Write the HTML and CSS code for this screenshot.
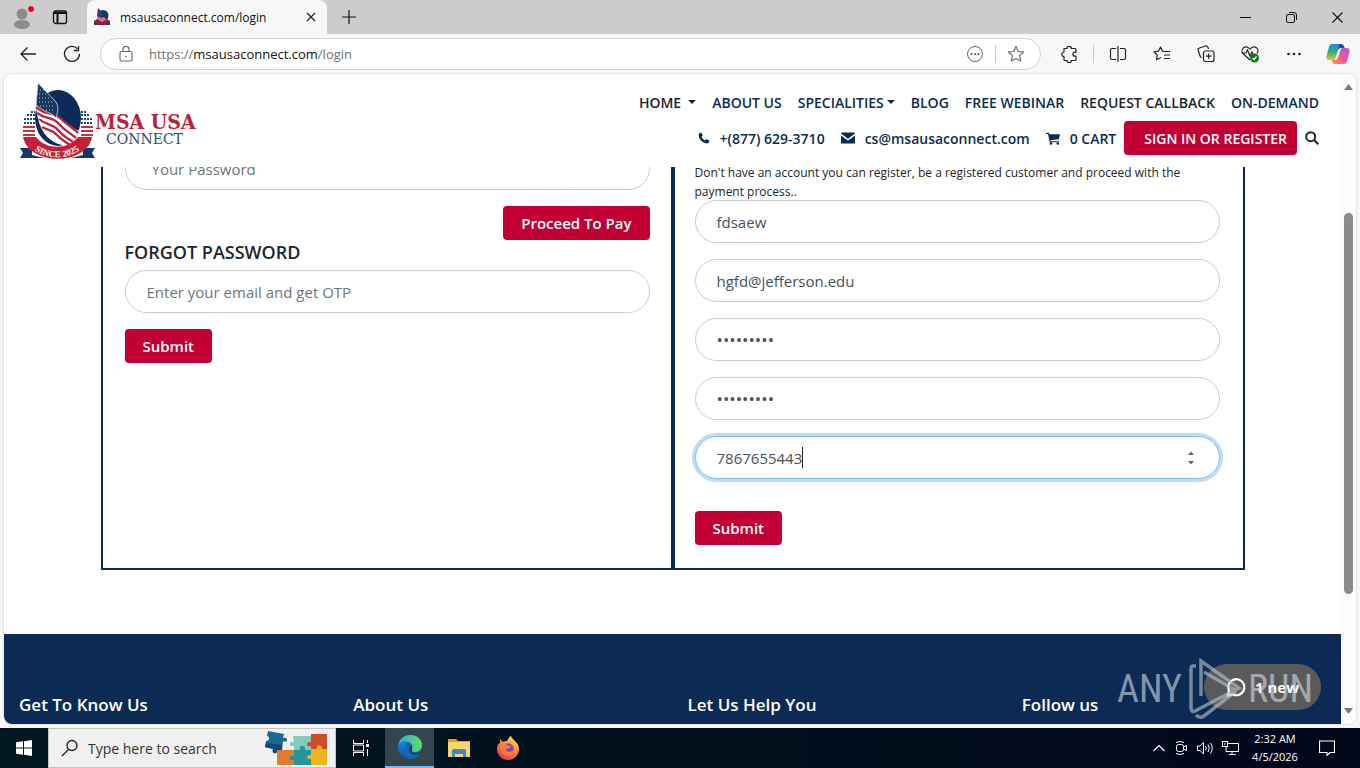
FILE: index.html
```html
<!DOCTYPE html>
<html lang="en">
<head>
<meta charset="utf-8">
<title>MSA USA Connect - Login</title>
<link rel="stylesheet" href="styles.css">
</head>
<body>
<div class="desktop">
  <div class="tabbar">
    <button class="tool" aria-label="Profile">
      <svg width="28" height="28" viewBox="0 0 28 28"><circle cx="14" cy="11" r="5.5" fill="#8f8b88"/><ellipse cx="14" cy="21.500" rx="8" ry="4.500" fill="#8f8b88"/><circle cx="23" cy="6" r="3.500" fill="#d5091e" stroke="#e9d3d3"/></svg>
    </button>
    <button class="tool workspaces" aria-label="Workspaces">
      <svg width="16" height="16" viewBox="0 0 16 16" fill="none" stroke="#111" stroke-width="1.300"><rect x="1.500" y="2" width="13" height="12.500" rx="2"/><path d="M2 4h12M5.500 4v10" stroke-width="2"/></svg>
    </button>
    <div class="tab">
      <svg width="18" height="18" viewBox="0 0 18 18"><circle cx="10" cy="7.500" r="5.500" fill="#18345f"/><path d="M5 0l5 5-2 6-4-2z" fill="#26426e"/><path d="M4 8l4 2 3-1 4 4-2 3H4z" fill="#de7185"/><path d="M1 13l3-2 5 3 5-3 3 2v4H1z" fill="#8d2338"/><path d="M1 15h4v2H1zM13 15h4v2h-4z" fill="#183d72"/></svg>
      <span class="tab-title">msausaconnect.com/login</span>
      <button class="plain" aria-label="Close tab"><svg width="10" height="10" viewBox="0 0 10 10" stroke="#222" stroke-width="1.200"><path d="M1 1l8 8M9 1L1 9"/></svg></button>
    </div>
    <button class="tool" aria-label="New tab"><svg width="14" height="14" viewBox="0 0 14 14" stroke="#111" stroke-width="1.200"><path d="M7 0v14M0 7h14"/></svg></button>
    <div class="window-buttons">
      <button class="plain" aria-label="Minimize"><svg width="11" height="11" viewBox="0 0 11 11" stroke="#111"><path d="M0 5.500h11"/></svg></button>
      <button class="plain" aria-label="Restore"><svg width="11" height="11" viewBox="0 0 11 11" fill="none" stroke="#111"><rect x=".5" y="2.500" width="8" height="8" rx="1.500"/><path d="M3 .5h5a2.500 2.500 0 0 1 2.500 2.500v5"/></svg></button>
      <button class="plain" aria-label="Close"><svg width="11" height="11" viewBox="0 0 11 11" stroke="#111" stroke-width="1.100"><path d="M.5.5l10 10M10.500.5l-10 10"/></svg></button>
    </div>
  </div>

  <div class="toolbar">
    <button class="tool" aria-label="Back"><svg width="18" height="16" viewBox="0 0 18 16" fill="none" stroke="#222" stroke-width="1.300"><path d="M17 8H2M8.500 1.500L2 8l6.500 6.500"/></svg></button>
    <button class="tool" aria-label="Refresh"><svg width="18" height="18" viewBox="0 0 18 18" fill="none" stroke="#222" stroke-width="1.300"><path d="M16.500 9A7.500 7.500 0 1 1 14.500 3.800M15.500 1v4.500H11"/></svg></button>
    <div class="address">
      <svg width="14" height="16" viewBox="0 0 14 16" fill="none" stroke="#666" stroke-width="1.100"><rect x="1" y="5.500" width="12" height="9.500" rx="1.500"/><path d="M4 5.500V3.500a3 3 0 0 1 6 0v2"/><circle cx="7" cy="10.500" r=".8" fill="#555" stroke="none"/></svg>
      <span class="url">https://<span class="host">msausaconnect.com</span>/login</span>
      <button class="plain" aria-label="More"><svg width="18" height="18" viewBox="0 0 18 18" fill="none" stroke="#666"><circle cx="9" cy="9" r="7.500"/><g fill="#555" stroke="none"><circle cx="5.500" cy="9" r="1"/><circle cx="9" cy="9" r="1"/><circle cx="12.500" cy="9" r="1"/></g></svg></button>
      <span class="divider"></span>
      <button class="plain" aria-label="Add to favorites"><svg width="18" height="18" viewBox="0 0 18 18" fill="none" stroke="#666" stroke-width="1.100" stroke-linejoin="round"><path d="M9 1.500l2.300 5 5.300.6-4 3.600 1.100 5.400L9 13.400l-4.700 2.700 1.100-5.400-4-3.600 5.300-.6z"/></svg></button>
    </div>
    <button class="tool" aria-label="Extensions"><svg width="18" height="18" viewBox="0 0 18 18" fill="none" stroke="#222" stroke-width="1.200" stroke-linejoin="round"><path d="M4 3.500h3a2.200 2.200 0 0 1 4.400 0H15a1 1 0 0 1 1 1v2.700h-1a2 2 0 0 0 0 4h1v3.300a1 1 0 0 1-1 1h-3.600a2.200 2.200 0 0 1-4.400 0H5a1 1 0 0 1-1-1v-3a2.200 2.200 0 0 1 0-4.500z"/></svg></button>
    <span class="divider"></span>
    <button class="tool" aria-label="Split screen"><svg width="18" height="18" viewBox="0 0 18 18" fill="none" stroke="#222" stroke-width="1.200"><path d="M7 3.500H3a1.500 1.500 0 0 0-1.500 1.500v8A1.500 1.500 0 0 0 3 14.500h4M11 3.500h4A1.500 1.500 0 0 1 16.500 5v8a1.500 1.500 0 0 1-1.500 1.500h-4M9 1v16"/></svg></button>
    <button class="tool" aria-label="Favorites"><svg width="18" height="18" viewBox="0 0 18 18" fill="none" stroke="#222" stroke-width="1.200" stroke-linejoin="round"><path d="M12 6.500l-2.500-.3L7.500 2l-2 4.200-4.500.7 3.300 3.200-.8 4.700L8 12.500M11 6.500h6M11 10h6M11 13.500h6"/></svg></button>
    <button class="tool" aria-label="Collections"><svg width="18" height="18" viewBox="0 0 18 18" fill="none" stroke="#222" stroke-width="1.200"><rect x="6.500" y="6" width="10.500" height="10.500" rx="2"/><path d="M11.700 8.500v5.500M9 11.200h5.500M4.500 12.500l-1-.5L1.200 5.500a2 2 0 0 1 1.200-2.500l6-2A2 2 0 0 1 11 2.500l.7 1.500"/></svg></button>
    <button class="tool" aria-label="Browser essentials"><svg width="20" height="18" viewBox="0 0 20 18" fill="none" stroke="#222" stroke-width="1.200"><path d="M10 15L3 8.500a4 4 0 0 1 6-5.300l1 1 1-1a4 4 0 0 1 6 5.300M1.500 8H6l1.500-3 2.500 6 2-4 1 2"/><circle cx="14.500" cy="13" r="4.500" fill="#107c10" stroke="none"/><path d="M12.500 13l1.500 1.500 2.500-3" stroke="#fff"/></svg></button>
    <button class="tool" aria-label="Settings and more"><svg width="16" height="4" viewBox="0 0 16 4" fill="#222"><circle cx="2.500" cy="2" r="1.300"/><circle cx="8" cy="2" r="1.300"/><circle cx="13.500" cy="2" r="1.300"/></svg></button>
    <button class="tool" aria-label="Copilot"><svg width="24" height="22" viewBox="0 0 24 22"><defs><linearGradient id="ca" x1="0" y1="0" x2="0" y2="1"><stop offset="0" stop-color="#1689e5"/><stop offset=".55" stop-color="#38b56d"/><stop offset="1" stop-color="#eac328"/></linearGradient><linearGradient id="cb" x1="1" y1="0" x2="0" y2="1"><stop offset="0" stop-color="#a55af0"/><stop offset=".5" stop-color="#ee5792"/><stop offset="1" stop-color="#ff9a45"/></linearGradient></defs><path d="M6 1h9c2 0 3 2 3.500 4H15c-2 0-2.500 1-3 2.500L9.500 15C9 16.500 8 17 6.500 17H3c-3 0-3-3-2-6L3 4c.6-2 1.500-3 3-3z" fill="url(#ca)"/><path d="M18 21H9c-2 0-3-2-3.500-4H9c2 0 2.500-1 3-2.500L14.500 7C15 5.500 16 5 17.500 5H21c3 0 3 3 2 6l-2 7c-.6 2-1.500 3-3 3z" fill="url(#cb)"/><path d="M13 1h2c2 0 3 2 3.500 4H15c-2 0-2.500 1-3 2z" fill="#2449b8"/></svg></button>
  </div>

  <div class="viewport">
    <div class="page">
      <header class="site-header">
        <a class="brand" href="#" aria-label="MSA USA Connect">
          <svg width="182" height="80" viewBox="0 0 182 80">
            <ellipse cx="39" cy="35" rx="23" ry="28" fill="#0b2b59"/>
            <g fill="#cf2c43"><path d="M4 43h12v2H4zM4 47h12v2H4zM4 51h12v2H4zM62 43h12v2H62zM62 47h12v2H62zM62 51h12v2H62z"/></g>
            <g stroke="#214c7c" stroke-width="2" stroke-dasharray="2 1"><path d="M5 40h11M5 36h11M8 32h8M12 29h4M62 40h12M62 36h12M62 32h8M62 29h5"/></g>
            <path d="M17 22c8 10 15 6 23 13 8 7 14 9 21 14L53 63C36 63 19 55 17 22z" fill="#fff"/>
            <g fill="none" stroke="#c3203c" stroke-width="2.300"><path d="M17 24c9 9 16 4 24 11 7 7 12 9 18 15"/><path d="M18 30c9 7 15 3 22 11 6 7 10 8 17 14"/><path d="M20 36c8 7 13 4 19 11 5 6 9 8 15 12"/><path d="M23 44c7 4 10 2 15 8 4 5 8 6 13 10"/></g>
            <path d="M19 0l18 19c3 5 2 9 0 16-4-6-9-4-20-13z" fill="#17375f" stroke="#d9e1eb" stroke-width=".8"/>
            <g stroke="#b9cadd" stroke-dasharray="1 2"><path d="M21 7h4M20 11h8M20 15h12M20 19h15M21 23h15M27 27h9"/></g>
            <path d="M1 65h12v7l12 3H1l3-5zM76 65H64v7l-12 3h24l-3-5z" fill="#17376a"/>
            <path d="M4 54h13c10 13 32 13 42 0h14c-5 29-63 29-69 0z" fill="#c4203a"/>
            <path id="ribbon" d="M8 60c14 19 46 19 60 0" fill="none"/>
            <text class="ribbon-text"><textPath href="#ribbon" startOffset="50%">SINCE 2025</textPath></text>
            <text x="76" y="46" class="brand-name">MSA USA</text>
            <text x="87" y="61" class="brand-sub">CONNECT</text>
          </svg>
        </a>
        <div class="menus">
          <nav class="menu" aria-label="Main">
            <a class="dark has-menu spaced" href="#">HOME</a>
            <a href="#">ABOUT US</a>
            <a class="has-menu" href="#">SPECIALITIES</a>
            <a href="#">BLOG</a>
            <a href="#">FREE WEBINAR</a>
            <a class="dark" href="#">REQUEST CALLBACK</a>
            <a href="#">ON-DEMAND</a>
          </nav>
          <div class="menu contact">
            <a href="#"><svg width="12" height="12" viewBox="0 0 12 12"><path d="M1 1.500L3.200.5l1.600 3-1.300 1.300c.7 1.600 2 2.900 3.600 3.600l1.400-1.300 3 1.700-1 2.200C6 13-.8 7 1 1.500z" fill="#0b2b55"/></svg>+(877) 629-3710</a>
            <a href="#"><svg width="14" height="12" viewBox="0 0 14 12" fill="#0b2b55"><path d="M0 1.500Q0 .5 1 .5h12q1 0 1 1L7 6.800z"/><path d="M0 3.500l7 5 7-5v7q0 1-1 1H1q-1 0-1-1z"/></svg>cs@msausaconnect.com</a>
            <a class="cart" href="#"><svg width="14" height="13" viewBox="0 0 14 13" fill="#0b2b55"><path d="M0 .8h2.800l.5 1.500H14l-1.200 5L4.600 8.200l.2 1H13v1H3.800L2 1.900H0z"/><circle cx="5" cy="11.500" r="1.300"/><circle cx="11.800" cy="11.500" r="1.300"/></svg>0 CART</a>
            <a class="sign-in" href="#">SIGN IN OR REGISTER</a>
            <button class="plain" aria-label="Search"><svg width="14" height="14" viewBox="0 0 14 14" fill="none" stroke="#212529" stroke-width="2"><circle cx="5.700" cy="5.700" r="4.500"/><path d="M9 9l4.300 4.300"/></svg></button>
          </div>
        </div>
      </header>

      <main class="panels">
        <section class="panel panel-login">
          <form class="stack">
            <input class="field" type="password" placeholder="Your Password" aria-label="Your Password">
            <button class="btn btn-end" type="button">Proceed To Pay</button>
          </form>
          <form class="forgot">
            <h2 class="heading"><label for="otp">FORGOT PASSWORD</label></h2>
            <div class="stack">
              <input class="field" id="otp" type="email" placeholder="Enter your email and get OTP">
              <button class="btn" type="button">Submit</button>
            </div>
          </form>
        </section>
        <section class="panel panel-register">
          <p class="note">Don't have an account you can register, be a registered customer and proceed with the payment process..</p>
          <form class="stack">
            <input class="field" type="text" value="fdsaew" aria-label="Name">
            <input class="field" type="email" value="hgfd@jefferson.edu" aria-label="Email">
            <input class="field field-secret" type="password" value="abcdefghi" aria-label="Password">
            <input class="field field-secret" type="password" value="abcdefghi" aria-label="Confirm password">
            <div class="phone">
              <input class="field field-active" type="number" value="7867655443" aria-label="Phone">
              <div class="field-overlay"><span class="caret"></span>
                <svg width="8" height="14" viewBox="0 0 8 14" fill="#666"><path d="M1 4l3-3.500L7 4zM1 10l3 3.500L7 10z"/></svg>
              </div>
            </div>
            <button class="btn btn-late" type="button">Submit</button>
          </form>
        </section>
      </main>

      <footer class="site-footer">
        <h3>Get To Know Us</h3>
        <h3>About Us</h3>
        <h3>Let Us Help You</h3>
        <h3>Follow us</h3>
      </footer>
      <button class="chat"><svg width="20" height="20" viewBox="0 0 20 20" fill="none" stroke="#fff" stroke-width="2.200"><path d="M2 18.500l1-5A8 8 0 1 1 7 17.500z"/></svg>1 new</button>
      <div class="watermark" aria-hidden="true">
        <span>ANY</span>
        <svg width="54" height="62" viewBox="0 0 54 62" fill="none" stroke="#bcc6d3" stroke-width="3.500"><path d="M8 8H5q-2 0-2 3v38q0 6 4 4l44-23L13 3v35M16 14l31 18M8 57q4 4 8 1l32-25"/></svg>
        <span>RUN</span>
      </div>
    </div>
    <div class="scrollbar" aria-hidden="true">
      <svg width="9" height="6" viewBox="0 0 9 6" fill="#777"><path d="M0 6l4.500-6L9 6z"/></svg>
      <div class="track"><div class="thumb"></div></div>
      <svg width="9" height="6" viewBox="0 0 9 6" fill="#777"><path d="M0 0l4.500 6L9 0z"/></svg>
    </div>
  </div>

  <div class="taskbar">
    <button class="task" aria-label="Start"><svg width="16" height="16" viewBox="0 0 16 16" fill="#fff"><path d="M0 2.300l7-1v6.200H0zM8 1.200L16 0v7.500H8zM0 8.500h7v6.200l-7-1zM8 8.500h8V16l-8-1.200z"/></svg></button>
    <label class="search">
      <svg width="18" height="18" viewBox="0 0 18 18" fill="none" stroke="#222" stroke-width="1.300"><circle cx="11" cy="6.500" r="5"/><path d="M7.500 10.500L1 17"/></svg>
      <input type="text" placeholder="Type here to search" aria-label="Type here to search">
      <svg width="64" height="36" viewBox="0 0 64 36"><path d="M3 1l16 3-1 4c6-2 5 6 0 3l-1 10-5-1c1 5-6 4-4-1L0 17l1-6c4 0 4-5 1-5z" fill="#176a98"/><path d="M1 13l16 2 0 6-5-1c1 5-6 4-4-1L0 17z" fill="#0f4777"/><path d="M28 6h18v15H29v-5c-6 1-5-6 0-4z" fill="#85cbbd"/><path d="M46 4h16v17H46v-5c-5 2-6-5 0-4z" fill="#cf4b29"/><path d="M12 20h17v15H12z" fill="#e47b2e"/><path d="M29 20h6c-2-5 6-6 5 0h7v15H29v-5c-6 1-6-6 0-4z" fill="#26949a"/><path d="M46 19h6c-2-5 6-5 5 0h5v16H46v-6c-5 1-5-5 0-4z" fill="#edb51d"/></svg>
    </label>
    <button class="task" aria-label="Task View"><svg width="18" height="16" viewBox="0 0 18 16" fill="none" stroke="#fff"><path d="M1.500 0v3.500h10V0M1.500 16v-3.500h10V16M1.500 5v6h10V5zM15.500 0v3M15.500 9v7"/><path d="M14 4h3v3h-3z" fill="#fff" stroke="none"/></svg></button>
    <button class="task task-active" aria-label="Microsoft Edge"><svg width="24" height="24" viewBox="0 0 24 24"><defs><linearGradient id="ea" x1="0" x2="1"><stop offset="0" stop-color="#2aaee0"/><stop offset="1" stop-color="#61db60"/></linearGradient><linearGradient id="eb" x2="0" y2="1"><stop offset="0" stop-color="#1689da"/><stop offset="1" stop-color="#1551a2"/></linearGradient></defs><circle cx="12" cy="12" r="12" fill="#1763b5"/><path d="M0 11C1 4 6 0 12 0c8 0 12 5 12 10 0 4-3 7-7 7-3 0-4-1-3-3 2-5-3-8-7-7-4 0-6 2-7 4z" fill="url(#ea)"/><path d="M0 11c2-4 6-6 10-4-5 4-5 12 1 16 0 0-10 0-11-10z" fill="url(#eb)"/><path d="M14 14c-1 3 1 4 4 4 2 0 4-1 6-3l-1 3c-3 2-11 3-12-3 0-3 1-4 3-5z" fill="#253f52"/></svg></button>
    <button class="task" aria-label="File Explorer"><svg width="22" height="20" viewBox="0 0 22 20"><path d="M0 1h8l2 2h12v6H0z" fill="#e5a01b"/><path d="M0 4h22v15H0z" fill="#f8d66e"/><path d="M4 19v-6q0-2 2-2h10q2 0 2 2v6h-3v-3H7v3z" fill="#3b8ac4"/></svg></button>
    <button class="task" aria-label="Firefox"><svg width="24" height="24" viewBox="0 0 24 24"><defs><linearGradient id="fa" x1=".8" y1="0" x2=".2" y2="1"><stop offset="0" stop-color="#fff044"/><stop offset=".4" stop-color="#ff9224"/><stop offset="1" stop-color="#f12667"/></linearGradient></defs><path d="M4 3l3 3c1-1 3-1 4-1 1-2 2-4 4-5 1 4 8 6 8 13 0 6-5 11-11 11S1 19 1 13c0-4 1-5 3-6z" fill="url(#fa)"/><circle cx="12.500" cy="12.500" r="5" fill="#7a3bd8"/><path d="M4 8c3-1 5-1 7 1l4 1c-1 3-4 2-5 4 2 3 6 2 8-1 0 5-4 7-7 7-5-1-7-5-7-12z" fill="#ff7a35"/></svg></button>
    <div class="tray">
      <svg width="12" height="8" viewBox="0 0 12 8" fill="none" stroke="#fff" stroke-width="1.200"><path d="M.5 7L6 1.500 11.500 7"/></svg>
      <svg width="16" height="16" viewBox="0 0 16 16" fill="none" stroke="#fff"><rect x="3.500" y="4.500" width="7" height="7" rx="2"/><path d="M10.500 7l3-1.500v5l-3-1.500M3 2.500q4-2 8 0M3 13.500q4 2 8 0"/></svg>
      <svg width="17" height="14" viewBox="0 0 17 14" fill="none" stroke="#fff"><path d="M.5 5v4.500H3L6.500 13V1.500L3 5zM8.500 5q1.500 2 0 4.500M11 3.500q2.500 3.500 0 7.500M13.500 2q3.500 5 0 10.500"/></svg>
      <svg width="17" height="14" viewBox="0 0 17 14" fill="none" stroke="#fff"><path d="M6 2.500h10.500v8H4V6M10 10.500v3M7 13.500h6.500"/><rect x=".5" y=".5" width="5" height="5"/><path d="M2 3h2"/></svg>
      <div class="clock"><span>2:32 AM</span><span>4/5/2026</span></div>
      <svg width="16" height="16" viewBox="0 0 16 16" fill="none" stroke="#fff" stroke-width="1.200"><path d="M.5 1h15v11.500H11l-3 3v-3H.5z"/></svg>
    </div>
  </div>
</div>
</body>
</html>
```
FILE: styles.css
```css
* { box-sizing: border-box; }
body { margin: 0; font-family: "Open Sans", "Noto Sans", sans-serif; color: #212529; }
button, input { font: inherit; }
button { cursor: pointer; }
a { color: inherit; text-decoration: none; }
svg { display: block; flex: none; }
h2, h3, p { margin: 0; }

.desktop { display: flex; flex-direction: column; height: 100vh; min-height: 600px; background: #f7f7f7; overflow: hidden; }
.plain, .tool, .task { border: 0; padding: 0; background: none; display: flex; align-items: center; justify-content: center; flex: none; }
.tool { width: 44px; height: 34px; }
.divider { width: 1px; height: 18px; margin: 0 2px; background: #c9c9c9; flex: none; }

/* Browser tab strip */
.tabbar { display: flex; align-items: center; height: 34px; flex: none; background: #ccc; }
.workspaces { width: 32px; margin-right: 11px; }
.tab { display: flex; align-items: center; gap: 9px; width: 240px; height: 34px; padding: 0 11px 0 6px; background: #f7f7f7; border-radius: 8px 8px 0 0; }
.tab-title { flex: 1; font-size: 12px; color: #111; }
.window-buttons { display: flex; margin-left: auto; }
.window-buttons .plain { width: 46px; height: 34px; }

/* Browser toolbar */
.toolbar { display: flex; align-items: center; height: 40px; flex: none; padding-left: 6px; }
.address { display: flex; align-items: center; flex: 1; height: 32px; margin: 0 6px; padding: 0 15px 0 18px; border: 1px solid #d2d2d2; border-radius: 16px; background: #fff; }
.url { flex: 1; margin-left: 16px; font-size: 13px; color: #737373; }
.host { color: #111; }
.address .divider { margin: 0 11px; }

/* Page area */
.viewport { display: flex; flex: 1; min-height: 0; margin: 0 4px 4px; border-radius: 8px; overflow: hidden; background: #fff; box-shadow: 0 0 2px #bbb; }
.page { position: relative; display: flex; flex-direction: column; flex: 1; min-width: 0; overflow: hidden; }
.scrollbar { display: flex; flex-direction: column; align-items: center; width: 15px; padding: 10px 0; background: #fcfcfc; }
.track { flex: 1; width: 9px; padding-top: 123px; }
.thumb { height: 77%; border-radius: 5px; background: #8b8b8b; }

.site-header { position: relative; z-index: 1; display: flex; justify-content: space-between; height: 93px; flex: none; padding: 9px 22px 0 15px; background: #fff; }
.brand-name { font: bold 21px "DejaVu Serif Condensed", "DejaVu Serif", serif; fill: #bf1e3a; }
.brand-sub { font: 14px "DejaVu Serif", "Liberation Serif", serif; fill: #294c7b; }
.ribbon-text { font: bold 9px "Liberation Serif", serif; fill: #fff; text-anchor: middle; }
.menus { display: flex; flex-direction: column; align-items: flex-end; }
.menu { display: flex; align-items: center; gap: 16px; height: 38px; font-size: 14px; font-weight: 600; color: #0b2b55; white-space: nowrap; }
.menu a { display: flex; align-items: center; }
.menu .dark { color: #212529; }
.has-menu::after { content: ""; margin-left: 3px; border: 4px solid transparent; border-top-color: currentColor; border-bottom: 0; }
.spaced::after { margin-left: 7px; }
.contact { height: 34px; }
.contact svg { margin-right: 10px; }
.contact .plain svg { margin: 0; }
.contact .plain { margin-left: -8px; }
.menu .sign-in { height: 34px; margin-left: -8px; padding: 0 10px 0 20px; border-radius: 4px; background: #c30034; color: #fff; }

.panels { display: flex; width: 100%; max-width: 1144px; height: 423px; flex: none; margin: -20px auto 64px; }
.panel { flex: 1; min-width: 0; border: 2px solid #0b2b55; border-top: 0; }
.panel-login { padding: 0 21px 24px 22px; }
.panel-register { padding: 16px 23px 24px 20px; }
.stack { display: flex; flex-direction: column; align-items: flex-start; gap: 16px; }
.field { display: block; width: 100%; height: 43px; padding: 0 21px; border: 1px solid #c9cccf; border-radius: 22px; outline: 0; background: #fff; font-size: 15px; color: #495057; }
.field::placeholder { color: #6c757d; opacity: 1; }
.field-secret { font-size: 17px; }
.panel-login > .stack .field { padding: 0 26px; }
.phone { position: relative; width: 100%; }
.field-active { border-color: #80bdff; box-shadow: 0 0 0 3px #c0dcf7; appearance: textfield; }
.field-active::-webkit-inner-spin-button { appearance: none; margin: 0; }
.field-overlay { position: absolute; inset: 0; display: flex; align-items: center; justify-content: space-between; padding: 0 25px 0 107px; pointer-events: none; }
.caret { width: 1px; height: 21px; background: #222; }
.btn { height: 34px; padding: 0 18px; border: 0; border-radius: 4px; background: #c30034; color: #fff; font-size: 15px; font-weight: 600; }
.btn-end { align-self: flex-end; }
.btn-late { margin-top: 16px; }
.heading { margin-bottom: 6px; font-size: 18px; line-height: 24px; font-weight: 600; }
.note { font-size: 12px; line-height: 19px; margin-bottom: -1px; }

.site-footer { display: grid; grid-template-columns: repeat(4, 1fr); flex: 1; padding-top: 58px; background: #0b2b55; color: #fff; }
.site-footer h3 { padding: 0 15px; font-size: 17px; line-height: 26px; font-weight: 600; }
.chat { position: absolute; right: 20px; bottom: 14px; display: flex; align-items: center; gap: 9px; height: 46px; padding: 0 22px; border: 0; border-radius: 23px; background: #5b5a5a; color: #fff; font-size: 15px; font-weight: 700; }
.watermark { position: absolute; right: 28px; bottom: 4px; display: flex; align-items: center; gap: 6px; font: 38px "Roboto Condensed", "Liberation Sans Narrow", Roboto, sans-serif; color: #d5dbe3; opacity: .6; pointer-events: none; }

/* Windows taskbar */
.taskbar { display: flex; height: 40px; flex: none; background: linear-gradient(90deg, #00181f, #02071a); color: #fff; }
.task { width: 49px; height: 40px; }
.task:first-child { width: 48px; }
.task-active { background: #34464d; border-bottom: 2px solid #76b9ed; }
.search { display: flex; align-items: center; width: 288px; padding: 0 6px 0 12px; background: #f0f0f0; border: 1px solid #c4c4c4; }
.search input { flex: 1; min-width: 0; padding: 0 0 0 9px; border: 0; outline: 0; background: none; font-size: 14px; }
.search input::placeholder { color: #333; opacity: 1; }
.tray { display: flex; align-items: center; gap: 8px; margin-left: auto; padding-right: 25px; }
.clock { display: flex; flex-direction: column; align-items: center; width: 56px; margin-right: 8px; font-size: 11px; line-height: 18px; white-space: nowrap; }
```
